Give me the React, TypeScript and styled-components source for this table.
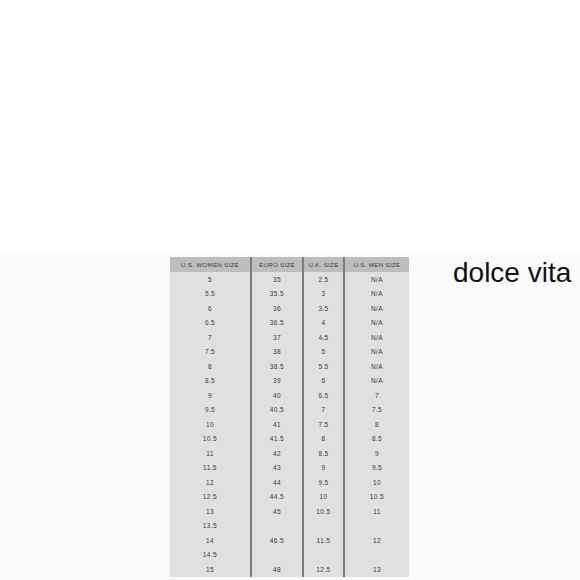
import React from "react";
import styled, { createGlobalStyle } from "styled-components";

const Global = createGlobalStyle`
  html, body { margin: 0; padding: 0; background: #ffffff; }
  body { font-family: "Liberation Sans", Arial, sans-serif; }
`;

const Page = styled.div`
  width: 580px;
  height: 580px;
  display: flex;
  flex-direction: column;
  overflow: hidden;
`;

const TopSpace = styled.div`
  height: 253px;
  flex: none;
  background: #ffffff;
`;

const Band = styled.div`
  flex: 1;
  background: #fafafa;
  display: flex;
  align-items: flex-start;
  padding: 4px 0 0 170px;
`;

const Table = styled.div`
  width: 239px;
  display: grid;
  grid-template-columns: 80px 52px 41px 66px;
  background: #e0e0e0;
`;

const HeadCell = styled.div<{ $sep?: boolean }>`
  height: 15px;
  background: #bdbdbd;
  display: flex;
  align-items: center;
  justify-content: center;
  font-size: 6.2px;
  letter-spacing: 0.3px;
  color: #3f3f3f;
  border-left: ${(p) => (p.$sep ? "2px solid #7a7a7a" : "none")};
  white-space: nowrap;
`;

const Cell = styled.div<{ $sep?: boolean }>`
  height: 14.5px;
  display: flex;
  align-items: center;
  justify-content: center;
  font-size: 6.5px;
  letter-spacing: 0.4px;
  color: #3a3a3a;
  border-left: ${(p) => (p.$sep ? "2px solid #7a7a7a" : "none")};
`;

const Brand = styled.div`
  margin: 0 0 0 44px;
  font-size: 28px;
  color: #111111;
  white-space: nowrap;
`;

const headers = ["U.S. WOMEN SIZE", "EURO SIZE", "U.K. SIZE", "U.S. MEN SIZE"];

const rows: string[][] = [
  ["5", "35", "2.5", "N/A"],
  ["5.5", "35.5", "3", "N/A"],
  ["6", "36", "3.5", "N/A"],
  ["6.5", "36.5", "4", "N/A"],
  ["7", "37", "4.5", "N/A"],
  ["7.5", "38", "5", "N/A"],
  ["8", "38.5", "5.5", "N/A"],
  ["8.5", "39", "6", "N/A"],
  ["9", "40", "6.5", "7"],
  ["9.5", "40.5", "7", "7.5"],
  ["10", "41", "7.5", "8"],
  ["10.5", "41.5", "8", "8.5"],
  ["11", "42", "8.5", "9"],
  ["11.5", "43", "9", "9.5"],
  ["12", "44", "9.5", "10"],
  ["12.5", "44.5", "10", "10.5"],
  ["13", "45", "10.5", "11"],
  ["13.5", "", "", ""],
  ["14", "46.5", "11.5", "12"],
  ["14.5", "", "", ""],
  ["15", "48", "12.5", "13"],
];

export default function App() {
  return (
    <Page>
      <Global />
      <TopSpace />
      <Band>
        <Table>
          {headers.map((h, i) => (
            <HeadCell key={h} $sep={i > 0}>
              {h}
            </HeadCell>
          ))}
          {rows.map((r, ri) =>
            r.map((c, ci) => (
              <Cell key={`${ri}-${ci}`} $sep={ci > 0}>
                {c}
              </Cell>
            ))
          )}
        </Table>
        <Brand>dolce vita</Brand>
      </Band>
    </Page>
  );
}
